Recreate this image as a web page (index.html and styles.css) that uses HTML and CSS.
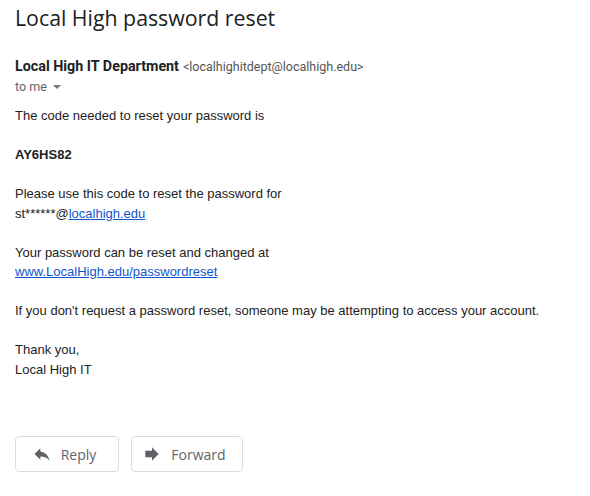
FILE: index.html
```html
<!DOCTYPE html>
<html>
<head>
<meta charset="utf-8">
<link rel="stylesheet" href="styles.css">
</head>
<body>
<div class="mail">
  <h1 class="subject">Local High password reset</h1>
  <div class="sender"><span class="name">Local High IT Department</span> <span class="addr">&lt;localhighitdept@localhigh.edu&gt;</span></div>
  <div class="to">to me <span class="caret"></span></div>
  <div class="body">
    The code needed to reset your password is<br><br>
    <b>AY6HS82</b><br><br>
    Please use this code to reset the password for<br>
    st******@<a href="#">localhigh.edu</a><br><br>
    Your password can be reset and changed at<br>
    <a href="#">www.LocalHigh.edu/passwordreset</a><br><br>
    If you don't request a password reset, someone may be attempting to access your account.<br><br>
    Thank you,<br>
    Local High IT
  </div>
  <div class="actions">
    <button class="btn btn-reply">
      <svg class="icon" viewBox="0 0 24 24"><path d="M10 9V5l-7 7 7 7v-4.1c5 0 8.5 1.6 11 5.1-1-5-4-10-11-11z"/></svg>
      <span>Reply</span>
    </button>
    <button class="btn btn-forward">
      <svg class="icon" viewBox="0 0 24 24"><path d="M12 8V4l8 8-8 8v-4H4V8z"/></svg>
      <span>Forward</span>
    </button>
  </div>
</div>
</body>
</html>
```
FILE: styles.css
```css
html, body {
  margin: 0;
  padding: 0;
  background: #ffffff;
}
.mail {
  padding: 4px 15px 0 15px;
  color: #222222;
}
.subject {
  margin: 0;
  font-family: "Open Sans", sans-serif;
  font-weight: 400;
  font-size: 21.3px;
  line-height: 28px;
  color: #202124;
}
.sender {
  margin-top: 25px;
  line-height: 18px;
  font-family: Roboto, sans-serif;
}
.sender .name {
  font-weight: 700;
  font-size: 14.3px;
  color: #202124;
}
.sender .addr {
  font-size: 12.5px;
  color: #555555;
}
.to {
  margin-top: 2px;
  font-family: Roboto, sans-serif;
  font-size: 12.5px;
  line-height: 18px;
  color: #5f6368;
  display: flex;
  align-items: center;
  gap: 6px;
}
.caret {
  width: 0;
  height: 0;
  border-left: 4px solid transparent;
  border-right: 4px solid transparent;
  border-top: 4px solid #777777;
}
.body {
  margin-top: 10px;
  font-family: "Liberation Sans", Arial, sans-serif;
  font-size: 13px;
  line-height: 19.5px;
  color: #222222;
}
.body b {
  font-weight: 700;
}
.body a {
  color: #1155cc;
  text-decoration: underline;
}
.actions {
  margin-top: 57px;
  display: flex;
  gap: 12px;
}
.btn {
  display: flex;
  align-items: center;
  justify-content: center;
  gap: 9px;
  height: 36px;
  padding: 0 6px 0 0;
  border: 1px solid #dadce0;
  border-radius: 4px;
  background: #ffffff;
  font-family: "Open Sans", sans-serif;
  font-size: 14px;
  font-weight: 500;
  color: #5f6368;
  box-sizing: border-box;
}
.btn-reply { width: 104px; }
.btn-forward { width: 112px; }
.icon {
  width: 20px;
  height: 20px;
  fill: #5f6368;
  flex: none;
}
```
